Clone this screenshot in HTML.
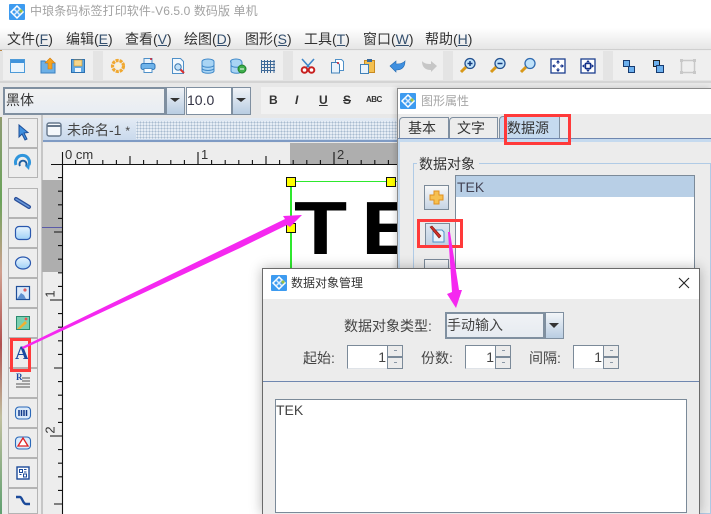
<!DOCTYPE html>
<html><head><meta charset="utf-8"><style>
html,body{margin:0;padding:0}
body{width:711px;height:514px;overflow:hidden;position:relative;background:#ececec;font-family:"Liberation Sans","Noto Sans CJK SC",sans-serif;color:#333}
.a{position:absolute;box-sizing:border-box}
.t{position:absolute;white-space:nowrap;line-height:1}
.m{position:absolute;top:31px;font-size:14px;line-height:17px;white-space:nowrap;color:#333}
.m u{color:#35506e}
.lb{position:absolute;left:8px;width:30px;height:30px;border:1px solid #b4b4b4;background:#ededed;box-sizing:border-box}
.lb svg,.ic{position:absolute}
.lb svg{left:4px;top:4px}
.sp{position:absolute;height:24px;border:1px solid #7b8a99;border-bottom-color:#dfe3e8;background:#fff;box-sizing:border-box;font-size:14px;text-align:right}
.sp b{position:absolute;right:16px;top:4px;font-weight:normal;line-height:15px;color:#444}
.sp i{position:absolute;right:-1px;width:16px;height:12px;background:#ececec;border:1px solid #7b8a99;box-sizing:border-box;font-style:normal}
.sp i:after{content:"";position:absolute;left:6px;top:4px;width:3px;height:1px;background:#8a97a5}
</style></head><body>

<!-- left desktop sliver -->
<div class="a" style="left:0;top:30px;width:2px;height:484px;background:linear-gradient(#c8843c 0,#8a9c70 20%,#6aa35a 35%,#d0a090 50%,#b05050 65%,#c0c0a0 80%,#60a070 100%)"></div>

<!-- title bar -->
<div class="a" style="left:0;top:0;width:711px;height:28px;background:#fff"></div>
<svg class="ic" style="left:9px;top:4px" width="16" height="16" viewBox="0 0 16 16"><rect width="16" height="16" rx="1" fill="#3d9bf0"/><path d="M8 2L14 8L8 14L2 8Z" fill="none" stroke="#fff" stroke-width="1.5"/><path d="M5 5L11 11M11 5L5 11" stroke="#d8ecff" stroke-width="1.5"/><circle cx="12" cy="7" r="1.6" fill="#9ac040"/></svg>
<div class="t" style="left:30px;top:3px;font-size:12px;line-height:17px;color:#a2a2a2;letter-spacing:.1px">中琅条码标签打印软件-V6.5.0 数码版 单机</div>

<!-- menu -->
<div class="a" style="left:0;top:28px;width:711px;height:22px;background:linear-gradient(#fff,#e6e6e6);border-bottom:1px solid #cfcfcf"></div>
<div class="m" style="left:7px">文件(<u>F</u>)</div>
<div class="m" style="left:66px">编辑(<u>E</u>)</div>
<div class="m" style="left:125px">查看(<u>V</u>)</div>
<div class="m" style="left:184px">绘图(<u>D</u>)</div>
<div class="m" style="left:245px">图形(<u>S</u>)</div>
<div class="m" style="left:304px">工具(<u>T</u>)</div>
<div class="m" style="left:363px">窗口(<u>W</u>)</div>
<div class="m" style="left:425px">帮助(<u>H</u>)</div>

<!-- toolbar 1 -->
<div class="a" style="left:0;top:51px;width:711px;height:32px;background:#e4e4e4;border-bottom:2px solid #d4d4d4"></div>
<div class="a" style="left:3px;top:51px;width:90px;height:29px;background:#efefef"></div>
<div class="a" style="left:103px;top:51px;width:180px;height:29px;background:#efefef"></div>
<div class="a" style="left:293px;top:51px;width:150px;height:29px;background:#efefef"></div>
<div class="a" style="left:453px;top:51px;width:150px;height:29px;background:#efefef"></div>
<div class="a" style="left:613px;top:51px;width:98px;height:29px;background:#efefef"></div>

<svg class="ic" style="left:0;top:50px" width="711" height="32" viewBox="0 50 711 32">
<rect x="10.5" y="59.5" width="14" height="13" fill="#eaf4fc" stroke="#4d9ad8"/><rect x="11" y="60" width="13" height="3" fill="#3f93dc"/>
<path d="M41 61h4l1 2h9v10H41z" fill="#6db0e6" stroke="#3a80c0"/><path d="M50 58l5 5h-3v6h-4v-6h-3z" fill="#f6a21c" stroke="#d07c10" stroke-width=".6"/>
<rect x="71.5" y="59.5" width="13" height="13" fill="#5fa8e4" stroke="#2c70b0"/><rect x="74" y="60" width="8" height="6" fill="#f6d68a" stroke="#c89430" stroke-width=".6"/><rect x="75" y="68" width="6" height="4" fill="#eef5fb"/>
<circle cx="118" cy="66" r="5.5" fill="none" stroke="#f0a830" stroke-width="3.2" stroke-dasharray="3 .9"/><circle cx="118" cy="66" r="2.2" fill="#fff3d0"/>
<rect x="144" y="58.5" width="8" height="5" fill="#e8f2fb" stroke="#4f90c8"/><rect x="141" y="63.5" width="14" height="6" rx="2" fill="#6eb3ea" stroke="#2f76b8"/><rect x="144" y="68.5" width="8" height="4" fill="#fff" stroke="#4f90c8"/><circle cx="151" cy="59" r="1" fill="#d02030"/>
<path d="M172.5 58.5h8l3 3v12h-11z" fill="#f2f8fd" stroke="#4f90c8"/><circle cx="178" cy="67" r="3.2" fill="#bfe0f8" stroke="#3a78b0"/><path d="M180.5 69.5l3.5 3.5" stroke="#d83030" stroke-width="2"/>
<g fill="#a8d4f4" stroke="#3f88c8"><ellipse cx="208" cy="61.5" rx="6" ry="2.5"/><path d="M202 61.5v9.5c0 3 12 3 12 0v-9.5"/><path d="M202 65c0 3 12 3 12 0M202 68.2c0 3 12 3 12 0" fill="none"/></g>
<g fill="#a8d4f4" stroke="#3f88c8"><ellipse cx="236" cy="61.5" rx="5.5" ry="2.5"/><path d="M231 61.5v9.5c0 3 11 3 11 0v-9.5"/><path d="M231 65c0 3 11 3 11 0" fill="none"/></g><circle cx="242" cy="69" r="4" fill="#3fae4c" stroke="#1f7f2c"/><path d="M240 69h4" stroke="#fff"/>
<path d="M261.5 60v13M264.5 60v13M267.5 60v13M270.5 60v13M274 60v13M261 61.5h14M261 64.5h14M261 67.5h14M261 70.5h14" stroke="#3f6a98" fill="none"/>
<path d="M302 59l8 9M314 59l-8 9" stroke="#3f86c8" stroke-width="1.6"/><circle cx="304.5" cy="70" r="2.8" fill="#fff" stroke="#c82020" stroke-width="2"/><circle cx="311.5" cy="70" r="2.8" fill="#fff" stroke="#c82020" stroke-width="2"/>
<path d="M335.5 59.5h6l2 2v9h-8z" fill="#fff" stroke="#4f90c8"/><path d="M331.5 62.5h6l2 2v8.500h-8z" fill="#e8f2fb" stroke="#3f80b8"/><circle cx="338" cy="63" r="1" fill="#d02030"/>
<rect x="364.5" y="60.5" width="10" height="12" fill="#f4c050" stroke="#c88a20"/><rect x="367" y="59" width="5" height="3" fill="#3a6a9a"/><path d="M360.5 64.5h8v9h-8z" fill="#e8f2fb" stroke="#3f80b8"/>
<path d="M390 66l6-5v3c4 0 7-.5 9-3 0 6-3 9-9 9v2z" fill="#3f90e0" stroke="#2068b0" stroke-width=".6"/>
<path d="M437 66l-6-5v3c-4 0-7-.5-9-3 0 6 3 9 9 9v2z" fill="#c6c6c6"/>
<g><circle cx="470" cy="63.5" r="5" fill="#bfe2fa" stroke="#23508f" stroke-width="1.3"/><path d="M461 72l5-5" stroke="#d89818" stroke-width="3"/><path d="M467.5 63.5h5M470 61v5" stroke="#123a80" stroke-width="1.5"/></g>
<g><circle cx="500" cy="63.5" r="5" fill="#bfe2fa" stroke="#23508f" stroke-width="1.3"/><path d="M491 72l5-5" stroke="#d89818" stroke-width="3"/><path d="M497.5 63.5h5" stroke="#123a80" stroke-width="1.5"/></g>
<g><circle cx="530" cy="63.5" r="5" fill="#bfe2fa" stroke="#2f6ab0" stroke-width="1.3"/><path d="M521 72l5-5" stroke="#d89818" stroke-width="3"/></g>
<rect x="551" y="59" width="14" height="14" fill="#fff" stroke="#1b3f8f" stroke-width="1.3"/><path d="M558 60l2 2.5h-4zM558 72l2-2.5h-4zM552 66l2.5-2v4zM564 66l-2.5-2v4z" fill="#12308a"/><path d="M558 62v2M558 68v2M554 66h2M560 66h2" stroke="#12308a"/>
<rect x="581" y="59" width="14" height="14" fill="#fff" stroke="#1b3f8f" stroke-width="1.3"/><rect x="585.5" y="63.5" width="5" height="5" fill="#fff" stroke="#12308a" stroke-width="1.4"/><path d="M588 60l2 2.5h-4zM588 72l2-2.5h-4zM582 66l2.500-2v4zM594 66l-2.500-2v4z" fill="#12308a"/>
<rect x="623.5" y="60.5" width="6" height="6" fill="#6cb0ee" stroke="#163a70"/><rect x="628.5" y="66.5" width="6" height="6" fill="#6cb0ee" stroke="#163a70"/>
<rect x="653.5" y="60.5" width="6" height="6" fill="#6cb0ee" stroke="#222"/><rect x="656.5" y="65.5" width="7" height="7" fill="#6cb0ee" stroke="#163a70"/>
<rect x="681.5" y="60.5" width="13" height="12" fill="none" stroke="#c8c8c8" stroke-width="1.5"/><path d="M680 59h3v3h-3zM693 59h3v3h-3zM680 71h3v3h-3zM693 71h3v3h-3z" fill="#c8c8c8"/>
</svg>

<!-- font toolbar -->
<div class="a" style="left:0;top:83px;width:711px;height:34px;background:#e8e8e8"></div>
<div class="a" style="left:3px;top:87px;width:163px;height:28px;background:linear-gradient(#f2f2f2,#e8edf3);border:2px solid #7f8fa0"></div>
<div class="t" style="left:6px;top:92px;font-size:14px;line-height:17px;color:#333;font-family:'Noto Sans CJK SC','Liberation Sans',sans-serif">黑体</div>
<div class="a" style="left:166px;top:87px;width:19px;height:28px;background:linear-gradient(#f0f3f7,#b9cde2);border:1px solid #7f8fa0"></div>
<div class="a" style="left:186px;top:87px;width:46px;height:28px;background:#fff;border:1px solid #7f8fa0"></div>
<div class="t" style="left:187px;top:92px;font-size:14px;line-height:17px;color:#334">10.0</div>
<div class="a" style="left:232px;top:87px;width:19px;height:28px;background:linear-gradient(#f0f3f7,#b9cde2);border:1px solid #7f8fa0"></div>
<svg class="ic" style="left:0;top:0" width="260" height="120"><path d="M170 98h10l-5 4zM236 98h10l-5 4z" fill="#333"/></svg>
<div class="a" style="left:261px;top:87px;width:136px;height:27px;background:#f1f1f1"></div>
<div class="t" style="left:269px;top:93px;font-size:12px;line-height:14px;font-weight:bold;color:#333">B</div>
<div class="t" style="left:295px;top:93px;font-size:12px;line-height:14px;font-weight:bold;font-style:italic;color:#333">I</div>
<div class="t" style="left:319px;top:93px;font-size:12px;line-height:14px;font-weight:bold;text-decoration:underline;color:#333">U</div>
<div class="t" style="left:343px;top:93px;font-size:12px;line-height:14px;font-weight:bold;text-decoration:line-through;color:#333">S</div>
<div class="t" style="left:366px;top:95px;font-size:8px;line-height:10px;font-weight:bold;color:#333;letter-spacing:-.5px">ABC</div>

<!-- left toolbar -->
<div class="a" style="left:41px;top:115px;width:2px;height:399px;background:#c6c6c6"></div>
<div class="lb" style="top:118px"><svg width="20" height="20" viewBox="0 0 20 20"><path d="M6 2l0 12 3-3 3 6 2-1-3-6 4-.5z" fill="#3f90e0" stroke="#1f4f98"/></svg></div>
<div class="lb" style="top:148px"><svg width="20" height="20" viewBox="0 0 20 20"><path d="M3 12a7 7 0 1 1 13 0" fill="none" stroke="#2f95dc" stroke-width="3"/><path d="M7 13a3.500 3.500 0 1 1 6 0" fill="none" stroke="#1f5fa0" stroke-width="2"/><path d="M12 13l5-2-1 6z" fill="#2f95dc"/></svg></div>
<div class="lb" style="top:188px"><svg width="20" height="20" viewBox="0 0 20 20"><path d="M3 6l13 8" stroke="#2a4f9a" stroke-width="4" stroke-linecap="round"/><path d="M3 6l13 8" stroke="#6a98d8" stroke-width="1.5" stroke-linecap="round"/></svg></div>
<div class="lb" style="top:218px"><svg width="20" height="20" viewBox="0 0 20 20"><defs><linearGradient id="g" x1="0" y1="0" x2="0" y2="1"><stop offset="0" stop-color="#eaf5fe"/><stop offset="1" stop-color="#9fd0f6"/></linearGradient></defs><rect x="2.5" y="3.5" width="15" height="13" rx="3.5" fill="url(#g)" stroke="#2a58ae" stroke-width="1.2"/></svg></div>
<div class="lb" style="top:248px"><svg width="20" height="20" viewBox="0 0 20 20"><ellipse cx="10" cy="10" rx="7.500" ry="6" fill="url(#g)" stroke="#2a58ae" stroke-width="1.2"/></svg></div>
<div class="lb" style="top:278px"><svg width="20" height="20" viewBox="0 0 20 20"><rect x="3.5" y="3.5" width="13" height="13" fill="#dceafa" stroke="#1f4f9a" stroke-width="1.2"/><path d="M4 16l4-6 3 2 2 4z" fill="#5f90d0"/><circle cx="12" cy="7" r="1.6" fill="#e06060"/></svg></div>
<div class="lb" style="top:308px"><svg width="20" height="20" viewBox="0 0 20 20"><rect x="3.5" y="3.5" width="13" height="13" fill="#7ad0b0" stroke="#2a8a70"/><path d="M4 16l8-8 2 2-7 6z" fill="#f0b030"/><circle cx="13" cy="6" r="1.4" fill="#f05050"/></svg></div>
<div class="lb" style="top:338px"><div class="t" style="left:6px;top:5px;font:bold 19px/20px 'Liberation Serif',serif;color:#1b4aa0">A</div></div>
<div class="lb" style="top:368px"><div class="t" style="left:7px;top:3px;font:bold 9px/10px 'Liberation Serif',serif;color:#1b4aa0">R</div><svg width="20" height="20" viewBox="0 0 20 20"><path d="M9 5h8M9 8h8M3 11h14M3 14h14" stroke="#555"/></svg></div>
<div class="lb" style="top:398px"><svg width="20" height="20" viewBox="0 0 20 20"><rect x="2.5" y="4" width="15" height="12" rx="3.5" fill="#dbeafa" stroke="#2a68b8" stroke-width="1.1"/><path d="M6 7v6M8.500 7v6M11 7v6M13.500 7v6" stroke="#123a8a" stroke-width="1.5"/></svg></div>
<div class="lb" style="top:428px"><svg width="20" height="20" viewBox="0 0 20 20"><rect x="2.5" y="4" width="15" height="12" rx="3.5" fill="#dbeafa" stroke="#2a68b8" stroke-width="1.1"/><path d="M10 5l5 8H5z" fill="#fff" stroke="#e02020" stroke-width="1.3"/></svg></div>
<div class="lb" style="top:458px"><svg width="20" height="20" viewBox="0 0 20 20"><rect x="4" y="4" width="12" height="12" fill="#fff" stroke="#1b4a9a" stroke-width="1.4"/><path d="M6.500 6.500h3v3h-3zM11 6.500h2.500M11 9h2.500M6.500 11.500h2M10.500 11h3v3h-3z" fill="none" stroke="#1b4a9a"/></svg></div>
<div class="lb" style="top:488px;height:26px"><svg width="20" height="20" viewBox="0 0 20 20"><path d="M3 4h4c2 0 3 7 6 7h4" fill="none" stroke="#1b4a9a" stroke-width="2.4"/></svg></div>

<!-- doc tab bar -->
<div class="a" style="left:43px;top:115px;width:354px;height:28px;background:#e8e8e8"></div>
<div class="a" style="left:43px;top:118px;width:354px;height:24px;background:linear-gradient(#e3ebf5,#c9d9ec);border-bottom:2px solid #7f9bc4"></div>
<div class="a" style="left:136px;top:121px;width:261px;height:18px;background-color:#e6edf5;background-image:radial-gradient(#a8bbd0 45%,transparent 50%);background-size:3px 3px"></div>
<svg class="ic" style="left:46px;top:122px" width="16" height="15" viewBox="0 0 16 15"><rect x="1" y="1" width="14" height="13" rx="2" fill="#f5f8fb" stroke="#67788c" stroke-width="1.4"/><path d="M1 4h14" stroke="#67788c" stroke-width="2"/></svg>
<div class="t" style="left:67px;top:122px;font-size:14px;line-height:16px;color:#444">未命名-1 <span style="font-size:12px">*</span></div>

<!-- ruler area -->
<div class="a" style="left:43px;top:143px;width:354px;height:371px;background:#ededed"></div>
<div class="a" style="left:290px;top:143px;width:107px;height:21px;background:#aeaeae"></div>
<div class="a" style="left:42px;top:180px;width:20px;height:92px;background:#aeaeae"></div>
<div class="a" style="left:42px;top:227px;width:20px;height:1px;background:#5a5aa8"></div>
<div class="a" style="left:63px;top:165px;width:334px;height:349px;background:#fff"></div>
<svg class="ic" style="left:0;top:0" width="397" height="514" viewBox="0 0 397 514">
<path fill="none" stroke="#111" stroke-width="1.1" d="M51 164.500H397M62.500 152V514
M75.600 160v4M89.200 160v4M102.800 160v4M116.400 160v4M130 156v8M143.600 160v4M157.200 160v4M170.800 160v4M184.400 160v4M198 152v12M211.600 160v4M225.200 160v4M238.800 160v4M252.400 160v4M266 156v8M279.600 160v4M293.200 160v4M306.800 160v4M320.400 160v4M334 152v12M347.600 160v4M361.200 160v4M374.800 160v4M388.400 160v4
M58 177.600h4M58 191.200h4M58 204.800h4M58 218.400h4M54 232h8M58 245.600h4M58 259.200h4M58 272.800h4M58 286.400h4M50 300h12M58 313.600h4M58 327.200h4M58 340.800h4M58 354.400h4M54 368h8M58 381.600h4M58 395.200h4M58 408.800h4M58 422.400h4M50 436h12M58 449.600h4M58 463.200h4M58 476.800h4M58 490.400h4M54 504h8"/>
</svg>
<div class="t" style="left:65px;top:148px;font-size:13px;line-height:14px;color:#333">0 cm</div>
<div class="t" style="left:201px;top:148px;font-size:13px;line-height:14px;color:#333">1</div>
<div class="t" style="left:337px;top:148px;font-size:13px;line-height:14px;color:#333">2</div>
<div class="t" style="left:47px;top:287px;font-size:13px;line-height:14px;color:#333;transform:rotate(-90deg)">1</div>
<div class="t" style="left:47px;top:423px;font-size:13px;line-height:14px;color:#333;transform:rotate(-90deg)">2</div>

<!-- selected text object -->
<div class="t" style="left:294px;top:184px;font-size:75px;line-height:88px;font-weight:bold;color:#000;transform-origin:0 0;transform:scaleX(1.16);letter-spacing:12px">TEK</div>
<div class="a" style="left:291px;top:181px;width:106px;height:1px;background:#2ee82e"></div>
<div class="a" style="left:290px;top:181px;width:2px;height:90px;background:#2ee82e"></div>
<div class="a" style="left:286px;top:177px;width:10px;height:10px;background:#ffff00;border:1px solid #111"></div>
<div class="a" style="left:386px;top:177px;width:10px;height:10px;background:#ffff00;border:1px solid #111"></div>
<div class="a" style="left:286px;top:223px;width:10px;height:10px;background:#ffff00;border:1px solid #111"></div>

<!-- dialog 1 -->
<div class="a" style="left:397px;top:88px;width:314px;height:426px;background:#ececec;border-top:1px solid #8a8a8a;border-left:1px solid #8a8a8a;box-shadow:-2px 0 5px rgba(0,0,0,.15)"></div>
<div class="a" style="left:398px;top:89px;width:313px;height:25px;background:#fff"></div>
<svg class="ic" style="left:400px;top:93px" width="16" height="16" viewBox="0 0 16 16"><rect width="16" height="16" rx="1" fill="#3d9bf0"/><path d="M8 2L14 8L8 14L2 8Z" fill="none" stroke="#fff" stroke-width="1.5"/><path d="M5 5L11 11M11 5L5 11" stroke="#d8ecff" stroke-width="1.5"/><circle cx="12" cy="7" r="1.6" fill="#9ac040"/></svg>
<div class="t" style="left:421px;top:93px;font-size:12px;line-height:16px;color:#a6a6a6">图形属性</div>
<!-- tabs -->
<div class="a" style="left:399px;top:117px;width:50px;height:22px;background:#ececec;border:1px solid #7f8fa0;border-bottom:0;border-radius:4px 0 0 0"></div>
<div class="a" style="left:449px;top:117px;width:49px;height:22px;background:#ececec;border:1px solid #7f8fa0;border-bottom:0;border-radius:4px 0 0 0"></div>
<div class="a" style="left:499px;top:116px;width:61px;height:23px;background:#c5daef;border:1px solid #7f8fa0;border-bottom:0;border-radius:4px 0 0 0"></div>
<div class="a" style="left:398px;top:138px;width:313px;height:1px;background:#6f87b0"></div>
<div class="a" style="left:398px;top:139px;width:313px;height:3px;background:#c5daef"></div>
<div class="a" style="left:398px;top:142px;width:2px;height:372px;background:#c5daef"></div>
<div class="t" style="left:408px;top:120px;font-size:14px;line-height:16px;color:#333">基本</div>
<div class="t" style="left:457px;top:120px;font-size:14px;line-height:16px;color:#333">文字</div>
<div class="t" style="left:507px;top:120px;font-size:14px;line-height:16px;color:#333">数据源</div>
<div class="a" style="left:504px;top:114px;width:67px;height:31px;border:3px solid #ff3a3a"></div>
<!-- group -->
<div class="a" style="left:413px;top:163px;width:298px;height:351px;border:1px solid #b0cbe6"></div>
<div class="a" style="left:417px;top:157px;width:62px;height:14px;background:#ececec"></div>
<div class="t" style="left:419px;top:156px;font-size:14px;line-height:16px;color:#333">数据对象</div>
<div class="a" style="left:455px;top:175px;width:240px;height:110px;background:#fff;border:1px solid #7b8a99"></div>
<div class="a" style="left:456px;top:176px;width:238px;height:21px;background:#b8cfe6"></div>
<div class="t" style="left:457px;top:179px;font-size:14px;line-height:16px;color:#445">TEK</div>
<div class="a" style="left:424px;top:185px;width:25px;height:25px;background:linear-gradient(#f8f8f8,#c6d4e4);border:1px solid #7b8a99"></div>
<svg class="ic" style="left:428px;top:189px" width="17" height="17" viewBox="0 0 17 17"><path d="M6 2h5v4h4v5h-4v4H6v-4H2V6h4z" fill="#f6c050" stroke="#e09020"/></svg>
<div class="a" style="left:425px;top:223px;width:25px;height:24px;background:linear-gradient(#dfe7f0,#bfd0e2);border:1px solid #7b8a99"></div>
<svg class="ic" style="left:428px;top:225px" width="19" height="20" viewBox="0 0 19 20"><path d="M5 5h9l2 2v10H5z" fill="#e9f3fb" stroke="#4f90c8"/><path d="M2 2l2-1 9 10-2 2z" fill="#d03028" stroke="#801810" stroke-width=".6"/></svg>
<div class="a" style="left:424px;top:259px;width:25px;height:25px;background:linear-gradient(#f8f8f8,#c6d4e4);border:1px solid #7b8a99"></div>
<div class="a" style="left:417px;top:219px;width:46px;height:29px;border:3px solid #ff3a3a"></div>

<!-- red box left tool -->
<div class="a" style="left:10px;top:338px;width:21px;height:34px;border:3px solid #ff3a3a"></div>

<!-- dialog 2 -->
<div class="a" style="left:262px;top:268px;width:438px;height:246px;background:#ececec;border:1px solid #6a6a6a;border-bottom:0;box-shadow:0 0 12px rgba(0,0,0,.28)"></div>
<div class="a" style="left:263px;top:269px;width:436px;height:30px;background:#fff"></div>
<svg class="ic" style="left:271px;top:275px" width="16" height="16" viewBox="0 0 16 16"><rect width="16" height="16" rx="1" fill="#3d9bf0"/><path d="M8 2L14 8L8 14L2 8Z" fill="none" stroke="#fff" stroke-width="1.5"/><path d="M5 5L11 11M11 5L5 11" stroke="#d8ecff" stroke-width="1.5"/><circle cx="12" cy="7" r="1.6" fill="#9ac040"/></svg>
<div class="t" style="left:291px;top:275px;font-size:12px;line-height:16px;color:#333">数据对象管理</div>
<svg class="ic" style="left:678px;top:277px" width="12" height="12" viewBox="0 0 12 12"><path d="M1 1l10 10M11 1L1 11" stroke="#222" stroke-width="1.1"/></svg>

<div class="t" style="left:344px;top:318px;font-size:14px;line-height:16px;color:#444">数据对象类型:</div>
<div class="a" style="left:445px;top:312px;width:100px;height:27px;background:linear-gradient(#f0f2f5,#e6ebf1);border:2px solid #8090a0"></div>
<div class="t" style="left:447px;top:317px;font-size:14px;line-height:16px;color:#444">手动输入</div>
<div class="a" style="left:545px;top:312px;width:19px;height:27px;background:linear-gradient(#f2f5f8,#b9cde2);border:1px solid #7f8fa0"></div>
<svg class="ic" style="left:549px;top:323px" width="11" height="6"><path d="M0 0h10l-5 5z" fill="#333"/></svg>

<div class="t" style="left:303px;top:350px;font-size:14px;line-height:16px;color:#444">起始:</div>
<div class="sp" style="left:347px;top:345px;width:56px"><b>1</b><i style="top:-1px"></i><i style="top:11px"></i></div>
<div class="t" style="left:421px;top:350px;font-size:14px;line-height:16px;color:#444">份数:</div>
<div class="sp" style="left:465px;top:345px;width:46px"><b>1</b><i style="top:-1px"></i><i style="top:11px"></i></div>
<div class="t" style="left:529px;top:350px;font-size:14px;line-height:16px;color:#444">间隔:</div>
<div class="sp" style="left:573px;top:345px;width:46px"><b>1</b><i style="top:-1px"></i><i style="top:11px"></i></div>

<div class="a" style="left:263px;top:381px;width:436px;height:1px;background:#6f87b0"></div>
<div class="a" style="left:275px;top:399px;width:412px;height:114px;background:#fff;border:1px solid #7b8a99"></div>
<div class="t" style="left:276px;top:402px;font-size:14px;line-height:16px;color:#444">TEK</div>

<!-- arrows on top -->
<svg class="ic" style="left:0;top:0" width="711" height="514" viewBox="0 0 711 514">
<path d="M22 347L285 219L283 216L302 215L290 227L287 225L240 248L23 349Z" fill="#f528f0"/>
<path d="M448 232L450 232L459 290L462 290L456 308L447 294L452 292Z" fill="#f528f0"/>
</svg>
</body></html>
